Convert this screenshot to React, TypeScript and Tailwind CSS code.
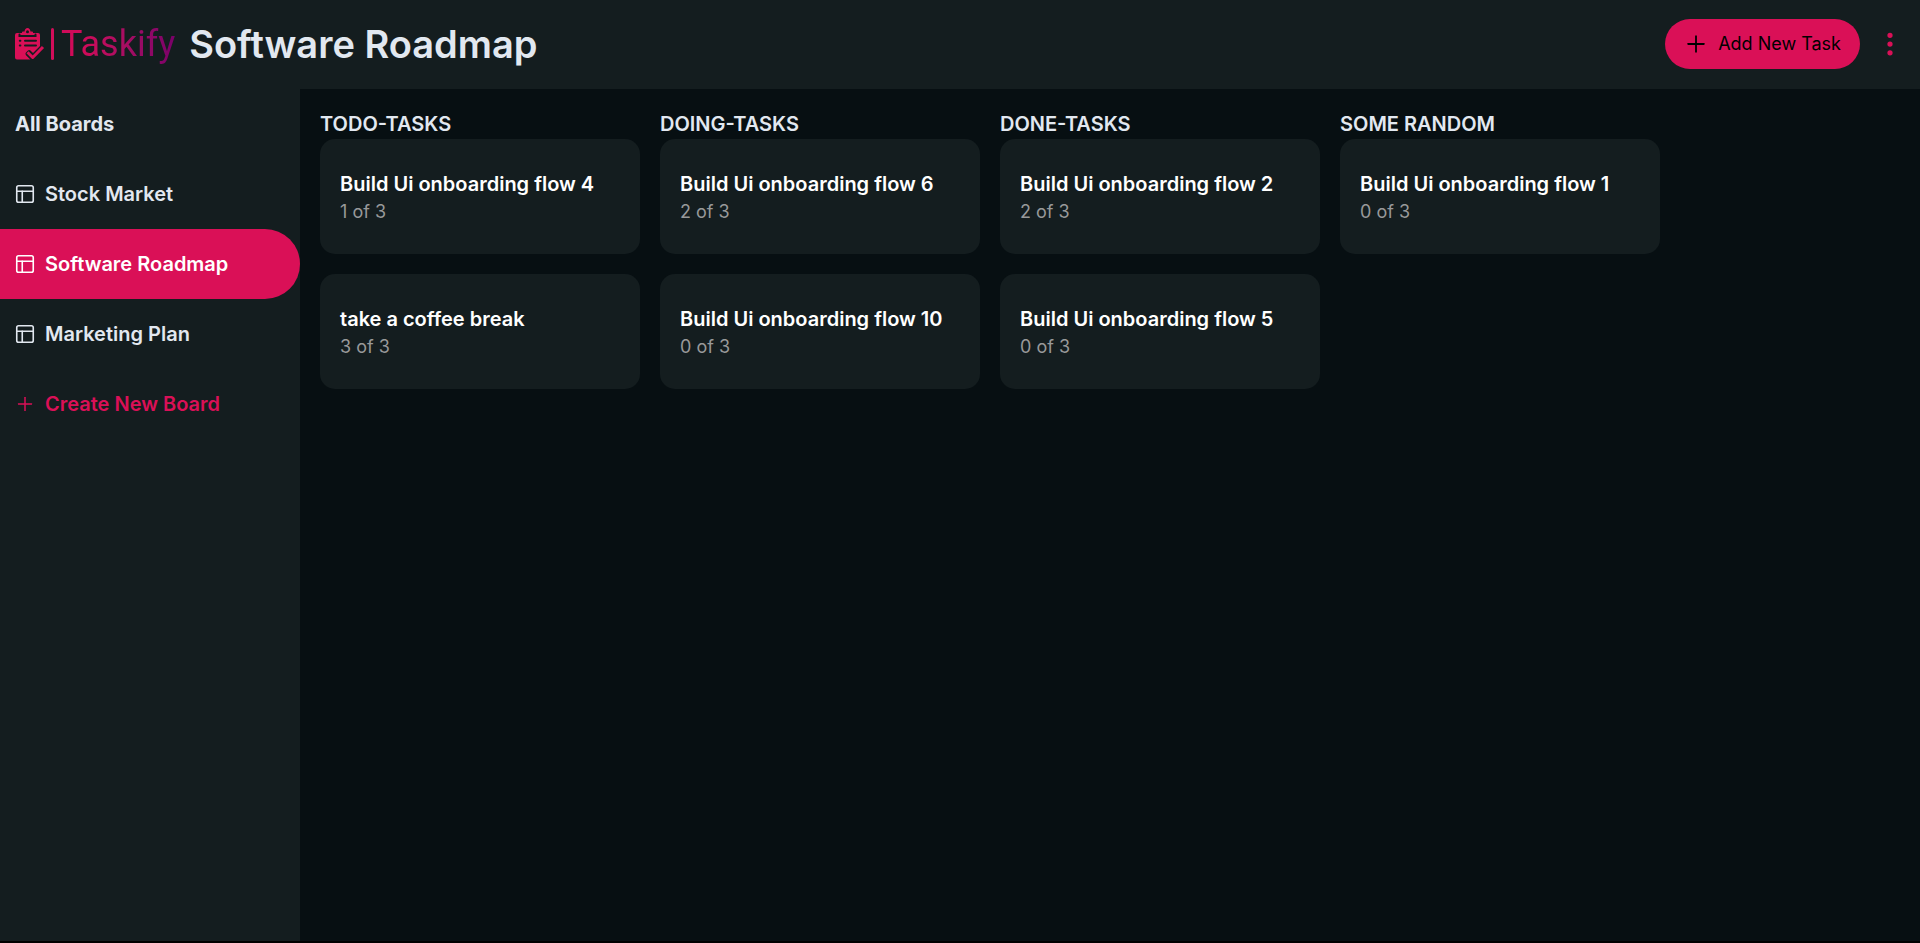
import { FiLayout } from "react-icons/fi";
import { BsThreeDotsVertical } from "react-icons/bs";
import { AiOutlinePlus } from "react-icons/ai";

type Task = { title: string; done: number; total: number };
type Column = { name: string; tasks: Task[] };

const boards = ["Stock Market", "Software Roadmap", "Marketing Plan"];
const activeBoard = "Software Roadmap";

const columns: Column[] = [
  {
    name: "TODO-TASKS",
    tasks: [
      { title: "Build Ui onboarding flow 4", done: 1, total: 3 },
      { title: "take a coffee break", done: 3, total: 3 },
    ],
  },
  {
    name: "DOING-TASKS",
    tasks: [
      { title: "Build Ui onboarding flow 6", done: 2, total: 3 },
      { title: "Build Ui onboarding flow 10", done: 0, total: 3 },
    ],
  },
  {
    name: "DONE-TASKS",
    tasks: [
      { title: "Build Ui onboarding flow 2", done: 2, total: 3 },
      { title: "Build Ui onboarding flow 5", done: 0, total: 3 },
    ],
  },
  {
    name: "SOME RANDOM",
    tasks: [{ title: "Build Ui onboarding flow 1", done: 0, total: 3 }],
  },
];

function Logo() {
  return (
    <a href="#" className="flex items-center" aria-label="Taskify home">
      <svg viewBox="0 0 30 32" className="h-8 w-7.5" aria-hidden="true">
        <path
          fill="#da1057"
          d="M2 5h5V4.300Q7 3.500 8 3.500h1.500Q10 0 12.500 0t3 3.500H17q1 0 1 .8V5h5q2 0 2 2v11l-7 7-2.500-2.500q-1.500-1-2.800.3L11 24.500q-1.200 1.300 0 2.700l4.300 4.300H2q-2 0-2-2V7q0-2 2-2z"
        />
        <circle cx="12.500" cy="3.800" r="1.500" fill="#141d1f" />
        <g fill="none" stroke="#141d1f" strokeWidth="2" strokeLinecap="round">
          <path d="M4.500 6.500V8h16V6.500M10 12.800h11M10 17.500h11" />
          <path d="M4.800 12.800h.6M4.800 17.500h.6" />
        </g>
        <path
          d="M12.500 24.300l5.200 5.200L28 19"
          fill="none"
          stroke="#da1057"
          strokeWidth="3"
          strokeLinejoin="round"
        />
      </svg>
      <span className="ml-1.5 h-8 w-[3px] rounded-full bg-[#d20e5a]" />
      <span className="ml-[7px] bg-linear-to-r from-[#cf0b59] from-20% to-[#7a0069] bg-clip-text font-[Roboto,sans-serif] text-4xl text-transparent">
        Taskify
      </span>
    </a>
  );
}

function TaskCard({ task }: { task: Task }) {
  return (
    <li className="rounded-[15px] bg-[#141d1f] px-5 py-[30px]">
      <h3 className="text-xl leading-[30px] font-semibold text-white">{task.title}</h3>
      <p className="text-lg leading-[25px] text-[#98999a]">
        {task.done} of {task.total}
      </p>
    </li>
  );
}

export default function App() {
  return (
    <div className="flex min-h-screen flex-col border-b-2 border-black bg-[#070f12] font-[Inter,sans-serif] text-slate-200">
      <header className="flex h-[89px] items-center bg-[#141d1f] pr-4 pb-px pl-[15px]">
        <Logo />
        <h1 className="ml-3.5 text-[38px] font-semibold">Software Roadmap</h1>
        <button
          type="button"
          className="ml-auto flex h-[50px] items-center gap-2.5 rounded-full bg-[#da1057] px-[19px] text-lg text-black"
        >
          <AiOutlinePlus size={24} />
          Add New Task
        </button>
        <button type="button" aria-label="Board options" className="ml-4 text-[#da1057]">
          <BsThreeDotsVertical size={28} />
        </button>
      </header>

      <div className="flex grow">
        <nav className="w-[300px] shrink-0 bg-[#141d1f] text-xl font-semibold">
          <h2 className="flex h-[70px] items-center px-[15px] font-bold">All Boards</h2>
          <ul>
            {boards.map((board) => (
              <li key={board}>
                <a
                  href="#"
                  aria-current={board === activeBoard ? "page" : undefined}
                  className={
                    board === activeBoard
                      ? "flex h-[70px] items-center gap-[9px] rounded-r-full bg-[#da1057] px-3.5 text-white"
                      : "flex h-[70px] items-center gap-[9px] px-3.5"
                  }
                >
                  <FiLayout size={22} strokeWidth={1.75} />
                  {board}
                </a>
              </li>
            ))}
          </ul>
          <button
            type="button"
            className="flex h-[70px] w-full items-center gap-[10px] px-[15px] text-[#da1057]"
          >
            <AiOutlinePlus size={20} />
            Create New Board
          </button>
        </nav>

        <main className="flex grow items-start gap-5 px-5 py-5">
          {columns.map((column) => (
            <section key={column.name} className="w-80">
              <h2 className="text-xl leading-[30px] font-semibold">{column.name}</h2>
              <ul className="flex flex-col gap-5">
                {column.tasks.map((task) => (
                  <TaskCard key={task.title} task={task} />
                ))}
              </ul>
            </section>
          ))}
        </main>
      </div>
    </div>
  );
}
